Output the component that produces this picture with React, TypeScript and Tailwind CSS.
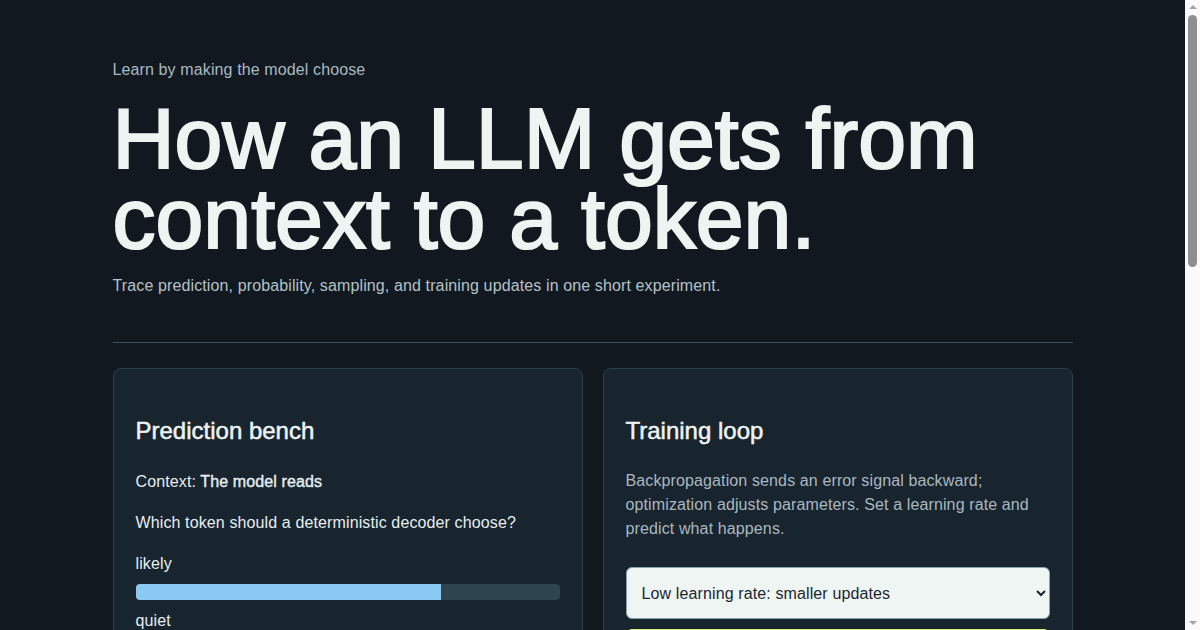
import React from 'react';

// Candidate tokens for the prediction bench, with their probabilities.
const candidates = [
  { token: 'likely', p: 72 },
  { token: 'quiet', p: 18 },
  { token: 'banana', p: 10 },
];

const Card = ({ title, children }: { title: string; children: React.ReactNode }) => (
  <section className="rounded-lg border border-[#2b404c] bg-[#18242e] px-[22px] pt-[47px] pb-7">
    <h2 className="text-2xl leading-[29px] tracking-normal text-[#eef4f2] [-webkit-text-stroke:0.5px_#eef4f2]">
      {title}
    </h2>
    {children}
  </section>
);

const ProbBar = ({ token, p }: { token: string; p: number }) => (
  <div className="mt-[9px] first:mt-[17px]">
    <div className="text-base leading-6 text-[#e6eef0]">{token}</div>
    <div className="mt-2 h-4 w-full overflow-hidden rounded bg-[#2e4550]">
      <div className="h-full bg-[#89c9f2]" style={{ width: `${p}%` }} />
    </div>
  </div>
);

// Classic page scrollbar, as the browser drew it in the screenshot.
const ScrollRail = () => (
  <div className="flex h-screen w-[15px] shrink-0 flex-col items-center bg-[#fafafa]">
    <div className="mt-[5px] h-0 w-0 border-x-[4.5px] border-b-[4px] border-x-transparent border-b-[#a3a3a3]" />
    <div className="mt-[6px] h-[252px] w-[9px] rounded-full bg-[#8f8f8f]" />
    <div className="flex-1" />
    <div className="mb-[5px] h-0 w-0 border-x-[4.5px] border-t-[4px] border-x-transparent border-t-[#a3a3a3]" />
  </div>
);

export default function App() {
  return (
    <div className="flex h-screen bg-[#111820] font-['Liberation_Sans',Arial,sans-serif] tracking-[0.12px] text-[#e6eef0]">
      <main className="h-screen flex-1 overflow-y-auto [scrollbar-width:none]">
        <div className="mx-auto max-w-[960px] pt-[58px] pb-24">
          <header className="border-b border-[#3b505b] pb-[44px]">
            <p className="text-base leading-6 text-[#a9b8c0]">Learn by making the model choose</p>
            <h1 className="mt-4 text-[86px] leading-[80px] tracking-normal text-[#eef4f2] [-webkit-text-stroke:2.2px_#eef4f2]">
              How an LLM gets from context to a token.
            </h1>
            <p className="mt-4 text-base leading-6 text-[#b4c2c8]">
              Trace prediction, probability, sampling, and training updates in one short experiment.
            </p>
          </header>

          <div className="mt-[25px] grid grid-cols-2 gap-5">
            <Card title="Prediction bench">
              <p className="mt-[25px] text-base leading-6">
                Context: <strong className="font-normal [-webkit-text-stroke:0.4px_#e6eef0]">The model reads</strong>
              </p>
              <p className="mt-[17px] text-base leading-6">Which token should a deterministic decoder choose?</p>
              <div>
                {candidates.map((c) => (
                  <ProbBar key={c.token} token={c.token} p={c.p} />
                ))}
              </div>
              <div className="mt-6 flex gap-3">
                {candidates.map((c) => (
                  <button
                    key={c.token}
                    className="h-11 flex-1 rounded-md border border-[#3b5561] bg-[#1f2f39] text-base text-[#e6eef0]"
                  >
                    {c.token}
                  </button>
                ))}
              </div>
              <p className="mt-4 text-sm leading-6 text-[#a9b8c0]">
                Pick a token to see how greedy decoding compares with sampling.
              </p>
            </Card>

            <Card title="Training loop">
              <p className="mt-6 text-base leading-6 text-[#a9b8c0]">
                Backpropagation sends an error signal backward; optimization adjusts parameters. Set a learning rate
                and predict what happens.
              </p>
              <select className="mt-[26px] h-[52px] w-full rounded-md border border-[#8aa4ad] bg-[#eef5f3] px-[11px] text-base text-[#1b2730]">
                <option>Low learning rate: smaller updates</option>
                <option>High learning rate: larger updates</option>
              </select>
              <button className="mt-[10px] h-12 w-full rounded-md border border-[#d6ec6e] bg-[#cfe66a] text-base font-bold text-[#111820]">
                Run one update step
              </button>
              <div className="mt-6 rounded-md border border-[#2b404c] bg-[#121c24] p-4">
                <div className="text-sm leading-6 text-[#a9b8c0]">Loss after step</div>
                <div className="text-3xl leading-10 text-[#eef4f2]">0.84</div>
              </div>
            </Card>
          </div>

          <div className="mt-5 grid grid-cols-2 gap-5">
            <Card title="Sampling lab">
              <p className="mt-6 text-base leading-6 text-[#a9b8c0]">
                Temperature reshapes the distribution before a token is drawn. Lower values sharpen it; higher values
                flatten it.
              </p>
              <input type="range" className="mt-6 w-full accent-[#89c9f2]" defaultValue={40} />
              <div className="mt-2 flex justify-between text-sm text-[#a9b8c0]">
                <span>0.2</span>
                <span>1.0</span>
                <span>2.0</span>
              </div>
            </Card>
            <Card title="What you learned">
              <ul className="mt-6 list-disc space-y-2 pl-5 text-base leading-6 text-[#a9b8c0]">
                <li>The model scores every token in its vocabulary.</li>
                <li>Softmax turns scores into probabilities.</li>
                <li>Decoding picks or samples the next token.</li>
                <li>Training nudges weights to reduce loss.</li>
              </ul>
            </Card>
          </div>

          <footer className="mt-16 border-t border-[#3b505b] pt-6 text-sm leading-6 text-[#a9b8c0]">
            A short, hands-on tour of next-token prediction. Nothing here calls a real model.
          </footer>
        </div>
      </main>
      <ScrollRail />
    </div>
  );
}
